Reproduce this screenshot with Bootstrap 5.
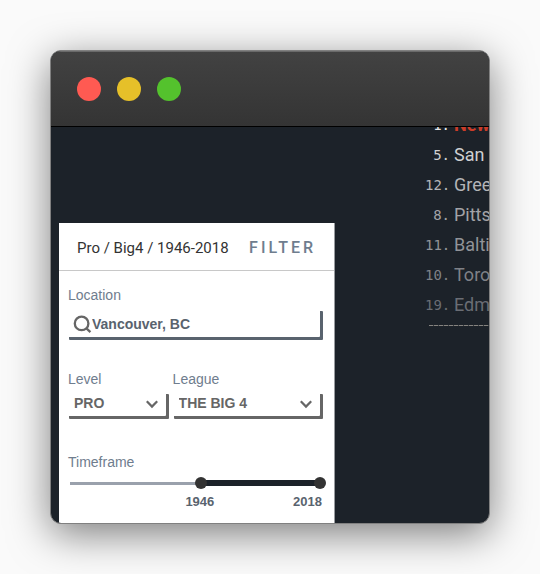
<!DOCTYPE html>
<html lang="en">
<head>
<meta charset="utf-8">
<meta name="viewport" content="width=device-width, initial-scale=1">
<title>Filter</title>
<link href="https://cdn.jsdelivr.net/npm/bootstrap@5.3.0/dist/css/bootstrap.min.css" rel="stylesheet">
<style>
body { background: #fafafa; font-family: "Liberation Sans", Arial, sans-serif; font-size: 14px; line-height: 20px; padding: 50px; }
.app-window { min-height: calc(100vh - 100px); border: 1px solid #808080; border-radius: 11px; background: #1c2229; box-shadow: 0 10px 40px rgba(0,0,0,.5); }
.title-bar { height: 76px; padding: 1px 26px 0; gap: 16px; background: linear-gradient(#424242, #343434); border-bottom: 1px solid #000; box-shadow: inset 0 1px 0 #6a6a6a; }
.light { width: 24px; height: 24px; border-radius: 50%; }
.light-close { background: #ff5a52; }
.light-min { background: #e6c029; }
.light-max { background: #54c22d; }
.stage { padding-left: 8px; }
.filter-panel { width: 276px; margin-top: 96px; border-right: 1px solid #989b9f; }
.filter-head { height: 48px; padding: 2px 18px 0; border-bottom: 1px solid #c8c8c8; font-family: Roboto, sans-serif; }
.crumb { font-size: 15px; color: #333; }
.filter-btn { font-size: 16px; letter-spacing: 3px; color: #6f7d8e; font-weight: 500; }
.filter-body { padding: 14px 14px 8px 7px; gap: 24px; }
.field-label { color: #6f7d8e; padding-left: 2px; }
.boxed { background: #fff; color: #666; border-radius: 1px; box-shadow: 3px 3px 0 #666; }
.boxed input, .boxed select { width: 100%; border: 0; background: transparent; font-weight: 700; outline: 0; appearance: none; padding: 0; color: inherit; }
.place-box { height: 29px; margin-top: 3px; padding: 3px 0 0 7px; color: #59636e; box-shadow: 3px 3px 0 #59636e; }
.pick-box { height: 25px; margin-top: 2px; }
.boxed select { height: 25px; padding: 0 24px 2px 8px; }
.pick-box svg { position: absolute; right: 8px; top: 9px; pointer-events: none; }
.selects { gap: 5px; }
.level { flex: 2 1 0; }
.league { flex: 3 1 0; }
.slider { height: 12px; margin: 5px -6px 0 4px; }
.slider::before { content: ""; position: absolute; left: 0; right: 50%; top: 5px; height: 3px; background: #9aa1ac; }
.slider::after { content: ""; position: absolute; left: 51%; right: 6px; top: 3px; height: 6px; background: #1c2229; }
.slider input { position: absolute; left: 0; top: 0; width: 100%; height: 12px; margin: 0; appearance: none; background: transparent; pointer-events: none; z-index: 1; }
.slider input::-webkit-slider-thumb { appearance: none; width: 12px; height: 12px; border-radius: 50%; background: #333; pointer-events: auto; }
.slider input::-moz-range-thumb { width: 12px; height: 12px; border: 0; border-radius: 50%; background: #333; pointer-events: auto; }
.years { margin-left: 47%; margin-top: 3px; margin-right: -2px; font-size: 13px; font-weight: 700; color: #59636e; }
.ranking { margin: -17px 0 0 90px; }
.ranking li { height: 30px; gap: 4px; font: 18px/30px Roboto, sans-serif; white-space: nowrap; }
.rank { width: 25px; text-align: right; font-family: "DejaVu Sans Mono", monospace; font-size: 14px; flex: none; }
.f1 { color: #e6e6e6; } .f2 { color: #cfd0d2; } .f3 { color: #b4b5b8; } .f4 { color: #a2a3a7; } .f5 { color: #919398; } .f6 { color: #7f8187; } .f7 { color: #6a6d74; }
.hot { color: #cc3d28; }
.ranking-end { height: 1px; margin: 5px 0 0 4px; background: repeating-linear-gradient(90deg, #85837f 0 4px, #3c4045 4px 5px); }
</style>
<script src="https://cdn.jsdelivr.net/npm/bootstrap@5.3.0/dist/js/bootstrap.bundle.min.js"></script>
</head>
<body>
<div class="app-window d-flex flex-column overflow-hidden">
  <header class="title-bar d-flex align-items-center">
    <span class="light light-close"></span><span class="light light-min"></span><span class="light light-max"></span>
  </header>
  <main class="stage d-flex flex-grow-1 overflow-hidden">
    <form class="filter-panel bg-white flex-shrink-0">
      <div class="filter-head d-flex align-items-center justify-content-between">
        <span class="crumb">Pro / Big4 / 1946-2018</span>
        <button type="button" class="filter-btn btn p-0 border-0">FILTER</button>
      </div>
      <div class="filter-body d-flex flex-column">
        <div class="mb-2">
          <label class="field-label d-block" for="place">Location</label>
          <div class="boxed place-box d-flex align-items-center">
            <svg class="flex-shrink-0" width="19" height="19" viewBox="0 0 19 19" fill="none" stroke="#666" stroke-width="2.3" aria-hidden="true"><circle cx="8.6" cy="8.4" r="6.8"/><path d="M13.2 13.2 17.4 17.2"/></svg>
            <input id="place" type="text" value="Vancouver, BC">
          </div>
        </div>
        <div class="selects d-flex mb-2">
          <div class="level">
            <label class="field-label d-block" for="level">Level</label>
            <div class="boxed pick-box position-relative">
              <select id="level"><option>PRO</option></select>
              <svg width="12" height="9" viewBox="0 0 12 9" fill="none" stroke="#666" stroke-width="2.2" aria-hidden="true"><path d="M.8 1.2 6 6.6 11.2 1.2"/></svg>
            </div>
          </div>
          <div class="league">
            <label class="field-label d-block" for="league">League</label>
            <div class="boxed pick-box position-relative">
              <select id="league"><option>THE BIG 4</option></select>
              <svg width="12" height="9" viewBox="0 0 12 9" fill="none" stroke="#666" stroke-width="2.2" aria-hidden="true"><path d="M.8 1.2 6 6.6 11.2 1.2"/></svg>
            </div>
          </div>
        </div>
        <div class="mt-1">
          <label class="field-label d-block" for="from">Timeframe</label>
          <div class="slider position-relative">
            <input id="from" type="range" min="1870" max="2018" value="1946">
            <input type="range" min="1870" max="2018" value="2018" aria-label="Timeframe end">
          </div>
          <div class="years d-flex justify-content-between"><span>1946</span><span>2018</span></div>
        </div>
      </div>
    </form>
    <section class="ranking flex-grow-1">
      <ol class="list-unstyled m-0">
        <li class="d-flex f1"><span class="rank">1.</span><b class="hot">New</b></li>
        <li class="d-flex f2"><span class="rank">5.</span><span>San</span></li>
        <li class="d-flex f3"><span class="rank">12.</span><span>Gree</span></li>
        <li class="d-flex f4"><span class="rank">8.</span><span>Pitts</span></li>
        <li class="d-flex f5"><span class="rank">11.</span><span>Balti</span></li>
        <li class="d-flex f6"><span class="rank">10.</span><span>Toro</span></li>
        <li class="d-flex f7"><span class="rank">19.</span><span>Edm</span></li>
      </ol>
      <div class="ranking-end"></div>
    </section>
  </main>
</div>
</body>
</html>
